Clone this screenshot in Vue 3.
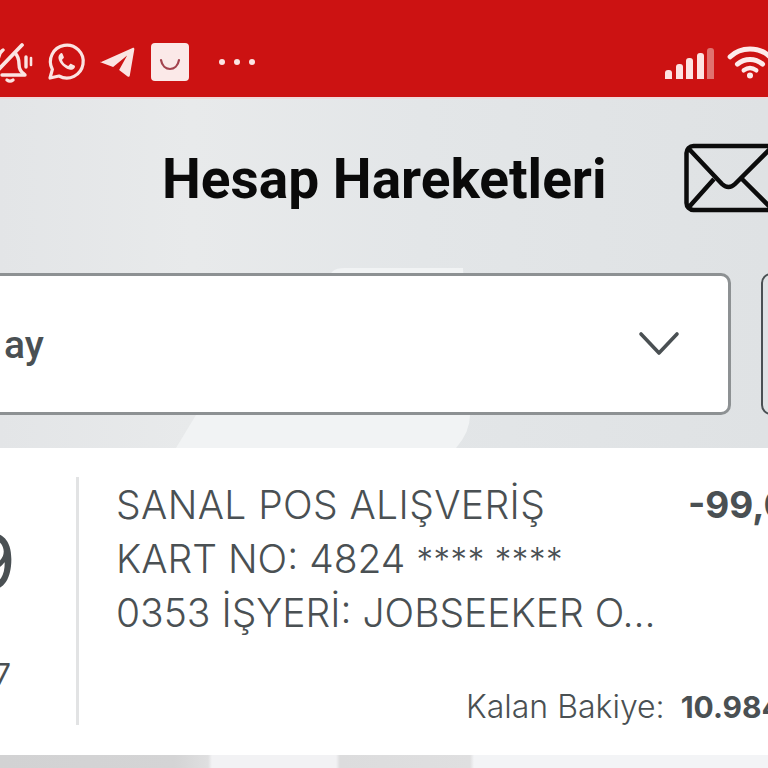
<template>
  <div class="screen">
    <div class="status-bar">
      <div class="status-left">
        <!-- muted alarm bell -->
        <svg width="34" height="44" viewBox="0 0 34 44" fill="none" stroke="#fbe4e2" stroke-width="3.4" stroke-linecap="round" stroke-linejoin="round">
          <path d="M2 35h23" />
          <path d="M15 13c3 3 4 8 4 11 0 4 2 8 5 10" />
          <path d="M3 10c-4 3-5 8-5 12" />
          <path d="M-2 30 22 5" stroke-width="3.8" />
          <path d="M7 40c2 1.500 4 1.500 6 0" />
          <path d="M26 17v10" />
          <path d="M31 18v7" stroke-width="2.600" />
        </svg>
        <!-- whatsapp -->
        <svg width="38" height="38" viewBox="0 0 38 38" fill="none">
          <path d="M3 35l2.400-8.600A16.400 16.400 0 1 1 12 33z" stroke="#fbe4e2" stroke-width="3.200" stroke-linejoin="round" />
          <path d="M13.600 10.600c-1.600.9-2.600 3-2 5.400 1.300 4.600 5.800 9.200 10.800 10.600 2.400.6 4.400-.4 5.400-2.200.4-.8.2-1.400-.4-1.800l-3-1.600c-.6-.3-1.100-.2-1.500.3l-1.100 1.300c-.3.400-.7.400-1.200.2-2.400-1-4.400-3-5.400-5.300-.2-.5-.1-.9.300-1.200l1-1c.4-.4.500-.9.300-1.400l-1.300-3.100c-.3-.8-1.100-1-1.900-.6z" fill="#fbe4e2" />
        </svg>
        <!-- telegram -->
        <svg class="ico-telegram" width="36" height="32" viewBox="0 0 36 32">
          <path d="M1 16.500 33.500 2c1.200-.5 2 .2 1.800 1.500l-4.500 26c-.2 1.300-1.200 1.700-2.200.9l-8.500-6.400 8-14.500-14 11.500-12-4.600c-1.200-.4-1.200-.9-.6-1.400z" fill="#fbe4e2" />
        </svg>
        <!-- shopping bag -->
        <div class="bag">
          <svg class="bag-smile" width="24" height="14" viewBox="0 0 24 14" fill="none">
            <path d="M3 2c1 6 5 9 9 9s8-3 9-9" stroke="#a3434e" stroke-width="2.200" stroke-linecap="round" />
          </svg>
        </div>
        <div class="dots"><i></i><i></i><i></i></div>
      </div>
      <div class="status-right">
        <div class="signal">
          <i v-for="b in bars" :key="b.h" :class="{ dim: b.dim }" :style="{ height: b.h + 'px' }"></i>
        </div>
        <svg class="wifi" width="46" height="36" viewBox="0 0 44 32" fill="none" stroke="#fdeaea" stroke-width="4.800" stroke-linecap="round">
          <path d="M3 11C13 1 31 1 41 11" />
          <path d="M10 18c7-6 17-6 24 0" />
          <path d="M16 24c4-3 8-3 12 0" stroke-width="4.200" />
          <circle cx="22" cy="29" r="1.800" fill="#fdeaea" stroke-width="2.200" />
        </svg>
      </div>
    </div>

    <div class="top-area">
      <svg class="swoosh" width="768" height="349" viewBox="0 0 768 349">
        <path d="M333 172Q336 169 345 169L463 169 470 316Q470 333 456 349L176 349 196 316z" fill="#f1f3f4" />
      </svg>
      <div class="title-row">
        <h1 class="title">Hesap Hareketleri</h1>
        <svg class="mail" width="84" height="70" viewBox="0 0 84 70" fill="none" stroke="#0c0c0c" stroke-width="4.500" stroke-linejoin="round">
          <rect x="2.500" y="3" width="95" height="64" rx="7" />
          <path d="M5 6 38 41c4 4 9 4 13 0L86 6" stroke-linecap="round" />
          <path d="M5 64 30 36M86 64 58 36" />
        </svg>
      </div>
      <div class="filter-row">
        <div class="select">
          <span class="select-text">ay</span>
          <svg width="42" height="26" viewBox="0 0 42 26" fill="none" stroke="#4a5053" stroke-width="3.600" stroke-linecap="round" stroke-linejoin="round">
            <path d="M3 3l18 19L39 3" />
          </svg>
        </div>
        <div class="side-btn"></div>
      </div>
    </div>

    <div class="tx-card">
      <div class="tx-date">
        <span class="tx-day">9</span>
        <span class="tx-year">7</span>
      </div>
      <div class="tx-divider"></div>
      <div class="tx-body">
        <div class="tx-main">
          <p class="tx-desc">
            <span class="tx-first">SANAL POS ALIŞVERİŞ</span><br />KART NO: 4824 <span class="tx-mask">**** ****</span><br />0353 İŞYERİ: JOBSEEKER O...
          </p>
          <span class="tx-amount">-99,00</span>
        </div>
        <div class="tx-balance">
          <span class="balance-label">Kalan Bakiye:</span>
          <span class="balance-value">10.984,00</span>
        </div>
      </div>
    </div>

    <div class="bottom-strip"></div>
  </div>
</template>

<script setup>
const bars = [
  { h: 9 },
  { h: 15 },
  { h: 21 },
  { h: 26 },
  { h: 31, dim: true }
]
</script>

<style>
html, body {
  margin: 0;
  background: #fff;
}
</style>

<style scoped>
.screen {
  width: 768px;
  height: 768px;
  overflow: hidden;
  display: flex;
  flex-direction: column;
  font-family: Inter, "Liberation Sans", sans-serif;
  color: #4a5053;
}

.status-bar {
  height: 97px;
  flex: none;
  background: #cc1212;
  display: flex;
  justify-content: space-between;
  align-items: flex-end;
  padding-bottom: 13px;
  box-sizing: border-box;
}

.status-left {
  display: flex;
  align-items: center;
  gap: 13px;
}

.status-left svg {
  overflow: visible;
  flex: none;
}

.ico-telegram {
  margin-left: 1px;
}

.bag {
  width: 38px;
  height: 38px;
  margin-left: 3px;
  background: #fbe9e8;
  border-radius: 4px;
  display: flex;
  align-items: center;
  justify-content: center;
}

.bag-smile {
  margin-top: 5px;
}

.dots {
  display: flex;
  gap: 9px;
  margin-left: 17px;
}

.dots i {
  width: 6px;
  height: 6px;
  border-radius: 50%;
  background: #fbe4e2;
}

.status-right {
  display: flex;
  align-items: flex-end;
  gap: 13px;
  margin-right: -5px;
  margin-bottom: 4px;
}

.signal {
  display: flex;
  align-items: flex-end;
  gap: 3.500px;
  margin-bottom: 1px;
}

.signal i {
  width: 7px;
  background: #fde4e2;
  border-radius: 3px 3px 0 0;
}

.signal i.dim {
  background: #e0726f;
}

.top-area {
  position: relative;
  height: 351px;
  flex: none;
  box-sizing: border-box;
  border-top: 2px solid #efd9da;
  background: linear-gradient(90deg, #e3e5e7 0%, #e8eaeb 25%, #e3e6e8 55%, #dfe2e4 100%);
}

.swoosh {
  position: absolute;
  left: 0;
  top: 0;
}

.title-row {
  position: relative;
  height: 174px;
  display: flex;
  align-items: center;
}

.title {
  margin: 0 0 14px 162px;
  font-family: Roboto, Inter, sans-serif;
  font-size: 55px;
  font-weight: 700;
  line-height: 1;
  color: #0a0a0a;
  white-space: nowrap;
}

.mail {
  margin: 0 0 16px auto;
  flex: none;
  overflow: visible;
}

.filter-row {
  position: relative;
  display: flex;
  gap: 30px;
  margin-left: -20px;
}

.select {
  width: 751px;
  height: 142px;
  flex: none;
  box-sizing: border-box;
  background: #fff;
  border: 3px solid #8d9193;
  border-radius: 10px;
  display: flex;
  align-items: center;
  justify-content: space-between;
  padding: 0 48px 0 21px;
}

.select-text {
  margin-top: 2px;
  font-family: Roboto, Inter, sans-serif;
  font-size: 39px;
  font-weight: 500;
}

.side-btn {
  width: 60px;
  height: 142px;
  flex: none;
  box-sizing: border-box;
  border: 2.500px solid #4a5053;
  border-radius: 10px;
}

.tx-card {
  height: 307px;
  flex: none;
  background: #fff;
  display: flex;
  box-sizing: border-box;
  padding-top: 29px;
}

.tx-date {
  width: 76px;
  height: 248px;
  flex: none;
  position: relative;
  overflow: hidden;
}

.tx-day {
  position: absolute;
  right: 60px;
  top: 46px;
  font-size: 76px;
  line-height: 1;
}

.tx-year {
  position: absolute;
  right: 65px;
  top: 182px;
  font-size: 30px;
  line-height: 1;
}

.tx-divider {
  width: 3px;
  height: 248px;
  flex: none;
  background: #e2e3e4;
}

.tx-body {
  margin-left: 37px;
  flex: none;
  width: 720px;
}

.tx-main {
  display: flex;
  height: 210px;
  padding-top: 1px;
  box-sizing: border-box;
}

.tx-desc {
  margin: 0;
  width: 572px;
  font-size: 39px;
  font-weight: 300;
  line-height: 54px;
  white-space: nowrap;
}

.tx-first {
  letter-spacing: 0.400px;
}

.tx-mask {
  font-size: 33px;
  letter-spacing: 0.600px;
  vertical-align: 2px;
}

.tx-amount {
  font-size: 37px;
  font-weight: 700;
  line-height: 54px;
}

.tx-balance {
  display: flex;
  gap: 16px;
  margin-left: 350px;
  align-items: baseline;
  white-space: nowrap;
}

.balance-label {
  font-size: 32px;
  font-weight: 300;
}

.balance-value {
  font-size: 30px;
  font-weight: 700;
}

.bottom-strip {
  height: 13px;
  flex: none;
  background: linear-gradient(90deg, #d2d2d3 0, #d4d4d5 175px, #dfdfe0 208px, #f2f2f4 212px, #f2f2f4 336px, #dcdcdd 340px, #dfdfe0 470px, #f3f4f6 474px);
}
</style>
